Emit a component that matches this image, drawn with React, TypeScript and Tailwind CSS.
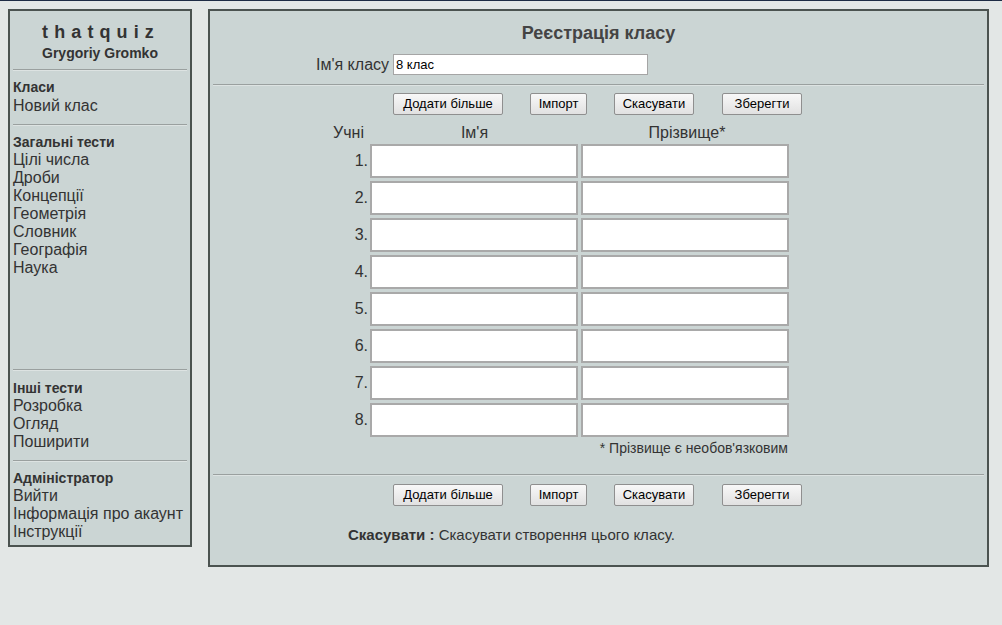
import React from 'react';

const topics = ['Цілі числа', 'Дроби', 'Концепції', 'Геометрія', 'Словник', 'Географія', 'Наука'];
const otherTests = ['Розробка', 'Огляд', 'Поширити'];
const adminLinks = ['Вийти', 'Інформація про акаунт', 'Інструкції'];

function Rule({ className = '' }: { className?: string }) {
  return <div className={`border-t border-b border-t-[#9aa09f] border-b-[#dde3e2] ${className}`}></div>;
}

function ActionButtons() {
  return (
    <div className="flex ml-[180px] text-[13px] text-black">
      <button className="w-[110px] h-[22px] border border-[#8f8f8f] rounded-[2px] bg-gradient-to-b from-[#f8f8f8] to-[#e1e1e1]">Додати більше</button>
      <button className="w-[57px] h-[22px] ml-[27px] border border-[#8f8f8f] rounded-[2px] bg-gradient-to-b from-[#f8f8f8] to-[#e1e1e1]">Імпорт</button>
      <button className="w-[80px] h-[22px] ml-[27px] border border-[#8f8f8f] rounded-[2px] bg-gradient-to-b from-[#f8f8f8] to-[#e1e1e1]">Скасувати</button>
      <button className="w-[80px] h-[22px] ml-[28px] border border-[#8f8f8f] rounded-[2px] bg-gradient-to-b from-[#f8f8f8] to-[#e1e1e1]">Зберегти</button>
    </div>
  );
}

function App() {
  return (
    <div
      className="min-h-screen bg-[#e3e7e6] border-t border-[#1d2b44] text-[#333]"
      style={{ fontFamily: '"Liberation Sans", Arial, sans-serif' }}
    >
      <div className="flex items-start gap-[16px] pl-[8px] pt-[8px]">
        {/* Sidebar */}
        <div className="w-[184px] border-2 border-[#4b5350] bg-[#cbd5d4] px-[3px] pt-[9px] pb-[4px]">
          <div className="text-center">
            <div className="text-[18px] leading-[24px] font-bold tracking-[0.34em] pl-[2px]">thatquiz</div>
            <div className="text-[14px] leading-[18px] font-bold">Grygoriy Gromko</div>
          </div>
          <Rule className="mt-[7px] mb-[7px]" />
          <div className="text-[14px] leading-[19px] font-bold">Класи</div>
          <div className="text-[16px] leading-[18px]">Новий клас</div>
          <Rule className="mt-[9px] mb-[7px]" />
          <div className="text-[14px] leading-[18px] font-bold">Загальні тести</div>
          {topics.map((t) => (
            <div key={t} className="text-[16px] leading-[18px]">{t}</div>
          ))}
          <Rule className="mt-[92px] mb-[8px]" />
          <div className="text-[14px] leading-[18px] font-bold">Інші тести</div>
          {otherTests.map((t) => (
            <div key={t} className="text-[16px] leading-[18px]">{t}</div>
          ))}
          <Rule className="mt-[9px] mb-[7px]" />
          <div className="text-[14px] leading-[18px] font-bold">Адміністратор</div>
          {adminLinks.map((t) => (
            <div key={t} className="text-[16px] leading-[18px] whitespace-nowrap">{t}</div>
          ))}
        </div>

        {/* Main panel */}
        <div className="w-[781px] h-[558px] border-2 border-[#4b5350] bg-[#cbd5d4] px-[3px] pt-[11px]">
          <h1 className="text-center text-[18px] leading-[22px] font-bold text-[#444]">Реєстрація класу</h1>

          <div className="flex items-center gap-[4px] ml-[103px] mt-[10px] h-[21px]">
            <span className="text-[16px]">Ім'я класу</span>
            <input
              defaultValue="8 клас"
              className="w-[255px] h-[21px] bg-white border border-[#a5a5a5] px-[2px] text-[13px] text-black outline-none"
            />
          </div>

          <Rule className="mt-[9px] mb-[7px]" />
          <ActionButtons />

          <div className="ml-[118px] mt-[9px] w-[460px]">
            <div className="flex text-[16px] leading-[18px]">
              <div className="w-[33px] text-right">Учні</div>
              <div className="w-[221px] text-center">Ім'я</div>
              <div className="w-[204px] text-center">Прізвище*</div>
            </div>
            <div className="mt-[2px] flex flex-col gap-[3px]">
              {[1, 2, 3, 4, 5, 6, 7, 8].map((n) => (
                <div key={n} className="flex items-center h-[34px]">
                  <div className="w-[39px] text-right text-[16px] pr-[2px]">{n}.</div>
                  <input className="w-[208px] h-[34px] bg-white border-2 border-[#a9a9a9] outline-none" />
                  <input className="w-[208px] h-[34px] ml-[3px] bg-white border-2 border-[#a9a9a9] outline-none" />
                </div>
              ))}
            </div>
            <div className="text-right text-[14px] leading-[16px] mt-[3px] pr-[3px]">* Прізвище є необов'язковим</div>
          </div>

          <Rule className="mt-[18px] mb-[8px]" />
          <ActionButtons />

          <div className="ml-[135px] mt-[20px] text-[15px] leading-[18px]">
            <span className="font-bold">Скасувати : </span>
            Скасувати створення цього класу.
          </div>
        </div>
      </div>
    </div>
  );
}

export default App;
